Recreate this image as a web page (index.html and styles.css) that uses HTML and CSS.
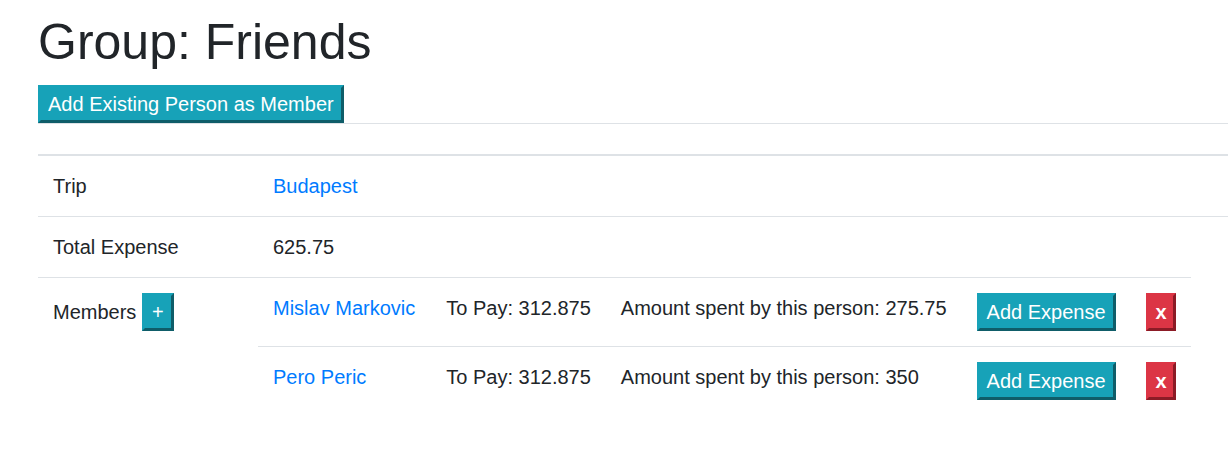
FILE: index.html
```
<!DOCTYPE html>
<html lang="en">
<head>
<meta charset="utf-8">
<title>Group: Friends</title>
<link rel="stylesheet" href="styles.css">
</head>
<body>
<div class="container">
  <h1 class="title">Group: Friends</h1>
  <div class="actions">
    <button class="btn btn-info" type="button">Add Existing Person as Member</button>
  </div>
  <table class="table">
    <thead>
      <tr><th class="col-label"></th><th></th></tr>
    </thead>
    <tbody>
      <tr>
        <td class="col-label">Trip</td>
        <td><a class="link" href="#">Budapest</a></td>
      </tr>
      <tr>
        <td class="col-label">Total Expense</td>
        <td>625.75</td>
      </tr>
      <tr>
        <td class="col-label">Members <button class="btn btn-info" type="button">+</button></td>
        <td class="nested-cell">
          <table class="table inner">
            <tbody>
              <tr>
                <td class="name"><a class="link" href="#">Mislav Markovic</a></td>
                <td>To Pay: 312.875</td>
                <td>Amount spent by this person: 275.75</td>
                <td><button class="btn btn-info" type="button">Add Expense</button></td>
                <td><button class="btn btn-danger" type="button">x</button></td>
              </tr>
              <tr>
                <td class="name"><a class="link" href="#">Pero Peric</a></td>
                <td>To Pay: 312.875</td>
                <td>Amount spent by this person: 350</td>
                <td><button class="btn btn-info" type="button">Add Expense</button></td>
                <td><button class="btn btn-danger" type="button">x</button></td>
              </tr>
            </tbody>
          </table>
        </td>
      </tr>
    </tbody>
  </table>
</div>
</body>
</html>
```
FILE: styles.css
```
html, body {
  margin: 0;
  padding: 0;
  overflow: hidden;
  background: #fff;
}
body {
  font-family: "Liberation Sans", Arial, sans-serif;
  font-size: 20px;
  line-height: 1.5;
  color: #212529;
}
.container {
  padding: 12px 0 0 38px;
}
.title {
  margin: 0;
  font-size: 50px;
  font-weight: 400;
  line-height: 1.2;
}
.actions {
  margin-top: 13px;
  display: flex;
}
.btn {
  font-family: inherit;
  font-size: 20px;
  line-height: 30px;
  padding: 1px 7px;
  border: 3px solid;
  margin: 0;
  color: #fff;
  cursor: pointer;
  display: inline-block;
  vertical-align: baseline;
}
.btn-info {
  background: #17a2b8;
  border-color: #17a2b8 #0f5d69 #0f5d69 #17a2b8;
}
.btn-danger {
  background: #dc3545;
  border-color: #dc3545 #8c1b26 #8c1b26 #dc3545;
  font-weight: 700;
  padding: 1px 6px 1px 7px;
}
.table {
  border-collapse: collapse;
  width: 1200px;
}
.table th,
.table td {
  padding: 15px;
  border-top: 1px solid #dee2e6;
  vertical-align: top;
  text-align: left;
  font-weight: 400;
}
.table thead th {
  border-bottom: 2px solid #dee2e6;
}
.col-label {
  width: 190px;
}
.link {
  color: #007bff;
  text-decoration: none;
}
.table td.nested-cell {
  padding: 0;
  border-top: none;
}
.inner {
  width: auto;
  margin-top: -1px;
}
.inner td {
  white-space: nowrap;
}
.inner td.name {
  padding-right: 16px;
}
```
